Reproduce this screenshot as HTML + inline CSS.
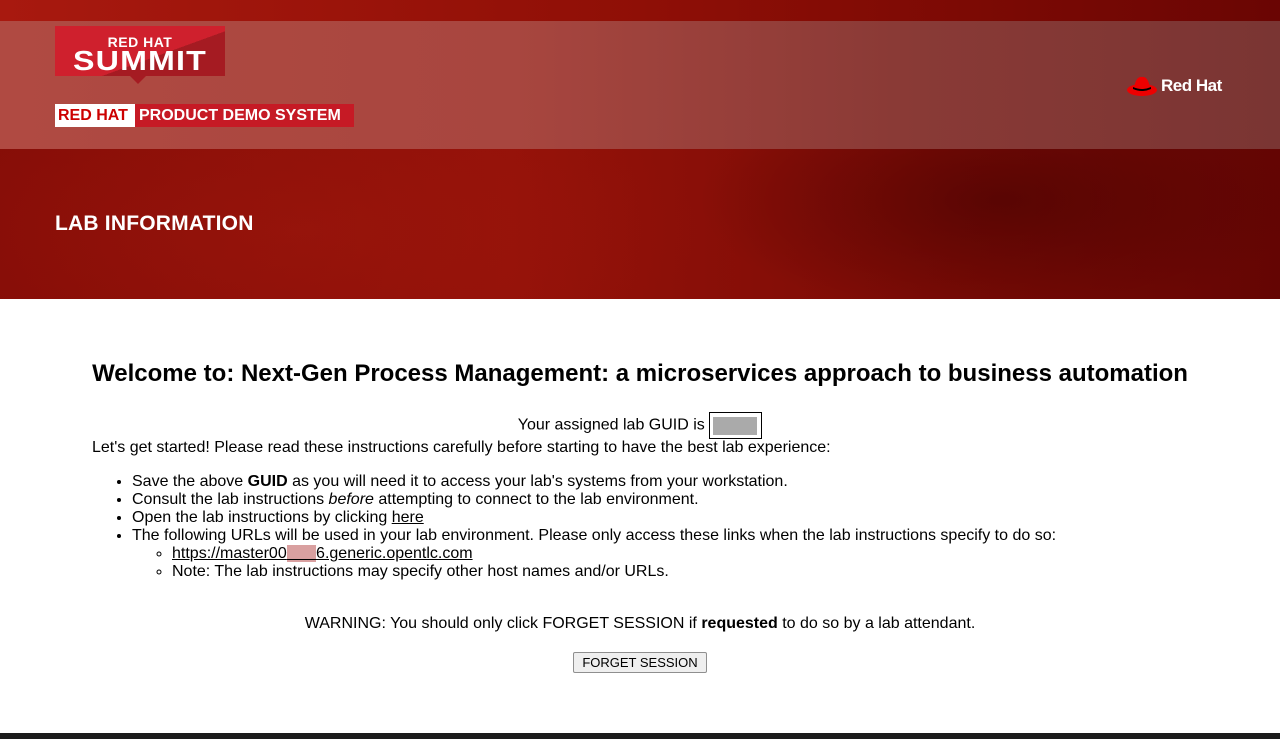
<!DOCTYPE html>
<html><head><meta charset="utf-8"><style>
*{box-sizing:border-box}
body{margin:0;width:1282px;height:739px;overflow:hidden;background:#fff;font-family:"Liberation Sans",Arial,sans-serif;color:#000;position:relative}
.hdr{position:absolute;left:0;top:0;width:1280px;height:299px;background:
radial-gradient(ellipse 300px 120px at 1000px 200px,rgba(60,0,0,.5),transparent),
radial-gradient(ellipse 400px 150px at 300px 230px,rgba(160,25,15,.4),transparent),
linear-gradient(90deg,#860d07,#951209 40%,#7e0c06 70%,#640503);}
.top{position:absolute;left:0;top:0;width:1280px;height:21px;background:linear-gradient(90deg,#a8190f,#8f0f06 50%,#6a0503)}
.band{position:absolute;left:0;top:21px;width:1280px;height:128px;background:linear-gradient(90deg,#b04a42,#a8463f 40%,#8a3a36 70%,#7a3533)}
.summit{position:absolute;left:55px;top:26px;width:170px;height:50px;background:linear-gradient(160deg,#cf202d 60%,#a51b22 60%);color:#fff;text-align:center;font-weight:bold}
.summit .a{font-size:14px;line-height:14px;padding-top:9px;letter-spacing:.5px}
.summit .b{font-size:28px;line-height:24px;letter-spacing:1px;transform:scaleX(1.15)}
.tri{position:absolute;left:130px;top:76px;border:8px solid transparent;border-top:8px solid #a51b22;border-bottom:0}
.pds{position:absolute;left:55px;top:104px;height:23px;display:flex;font-weight:bold;font-size:16px;line-height:23px;white-space:nowrap}
.pds .w{background:#fff;color:#cc0000;padding:0 3px;width:80px;overflow:hidden}
.pds .r{background:#c61a25;color:#fff;padding:0 4px;width:219px;overflow:hidden}
.rh{position:absolute;left:1126px;top:74px;display:flex;align-items:center;color:#fff;font-weight:bold;font-size:17px;letter-spacing:-.5px}
.lab{position:absolute;left:55px;top:212px;color:#fff;font-weight:bold;font-size:21px;letter-spacing:.2px}
h1{position:absolute;left:0;width:1280px;top:360px;margin:0;text-align:center;font-size:24px;font-weight:bold}
.txt{position:absolute;left:92px;top:412px;font-size:16px;line-height:18px;width:1100px}
.guid{display:inline-block;width:53px;height:27px;border:1px solid #000;vertical-align:middle;position:relative}
.guid i{position:absolute;left:3px;top:4px;width:44px;height:18px;background:#aaa}
ul{margin:16px 0 0;padding-left:40px}
ul ul{margin:0;list-style:circle}
a{color:#000}
.warn{position:absolute;left:0;width:1280px;top:615px;text-align:center;font-size:16px}
.btn{position:absolute;left:573px;top:652px;width:134px;height:21px;background:#efefef;border:1px solid #8f8f8f;border-radius:2px;font-size:13px;text-align:center;line-height:19px}
.foot{position:absolute;left:0;top:733px;width:1280px;height:6px;background:#1c1c1c}
</style></head><body>
<div class="hdr"></div><div class="top"></div><div class="band"></div>
<div class="summit"><div class="a">RED HAT</div><div class="b">SUMMIT</div></div><div class="tri"></div>
<div class="pds"><div class="w">RED HAT</div><div class="r">PRODUCT DEMO SYSTEM</div></div>
<div class="rh"><svg width="32" height="24" viewBox="0 0 32 24"><ellipse cx="16" cy="16" rx="15" ry="6" fill="#e00"/><path d="M8 14 Q10 2 16 3 Q22 2 24 14Z" fill="#e00"/><path d="M7 13 Q16 17 25 13 L25 15 Q16 19 7 15Z" fill="#000"/></svg><span style="margin-left:3px">Red Hat</span></div>
<div class="lab">LAB INFORMATION</div>
<h1>Welcome to: Next-Gen Process Management: a microservices approach to business automation</h1>
<div class="txt">
<div style="text-align:center;width:1096px">Your assigned lab GUID is <span class="guid"><i></i></span></div>
<div>Let's get started! Please read these instructions carefully before starting to have the best lab experience:</div>
<ul>
<li>Save the above <b>GUID</b> as you will need it to access your lab's systems from your workstation.</li>
<li>Consult the lab instructions <i>before</i> attempting to connect to the lab environment.</li>
<li>Open the lab instructions by clicking <a href="#">here</a></li>
<li>The following URLs will be used in your lab environment. Please only access these links when the lab instructions specify to do so:
<ul><li><a href="#">https://master00<span style="background:#d9a0a0;color:transparent">-xxx</span>6.generic.opentlc.com</a></li>
<li>Note: The lab instructions may specify other host names and/or URLs.</li></ul></li>
</ul></div>
<div class="warn">WARNING: You should only click FORGET SESSION if <b>requested</b> to do so by a lab attendant.</div>
<div class="btn">FORGET SESSION</div>
<div class="foot"></div>
</body></html>
